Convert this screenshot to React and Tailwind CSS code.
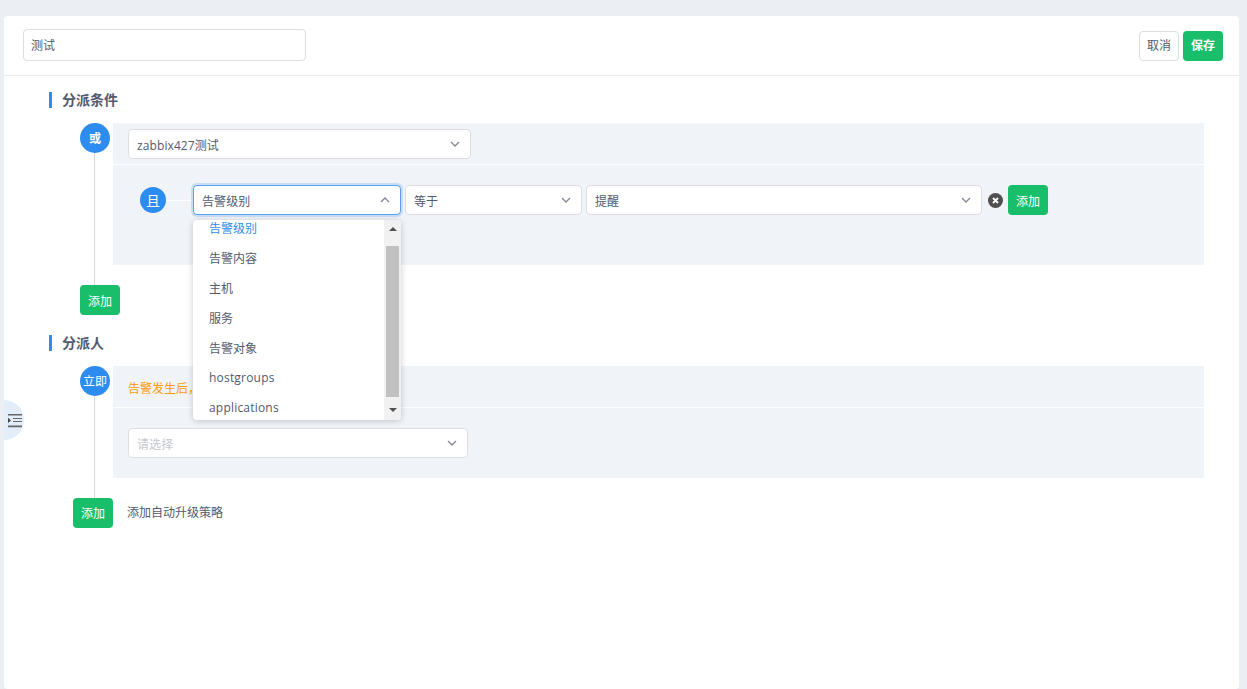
import React from 'react';

const Chevron = ({ up }) => (
  <svg width="12" height="8" viewBox="0 0 12 8" fill="none" stroke="#808695" strokeWidth="1.3" className="shrink-0">
    <path d={up ? 'M2 6l4-4 4 4' : 'M2 2l4 4 4-4'} />
  </svg>
);

const Select = ({ value, placeholder, width, focused, up, children }) => (
  <div className={`relative shrink-0 ${width}`}>
    <div
      className={`flex h-[30px] items-center justify-between rounded border bg-white pl-2 pr-[9px] ${
        focused ? 'border-[#57a3f3] shadow-[0_0_0_2px_rgba(45,140,240,0.2)]' : 'border-[#dcdee2]'
      }`}
    >
      <span className={`pt-1 tracking-[0.1px] ${value ? 'text-[#515a6e]' : 'text-[#c5c8ce]'}`}>{value || placeholder}</span>
      <Chevron up={up} />
    </div>
    {children}
  </div>
);

const AddButton = ({ className = '' }) => (
  <button className={`h-[30px] w-10 shrink-0 rounded bg-[#19be6b] text-white ${className}`}>添加</button>
);

const SectionTitle = ({ children }) => (
  <div className="ml-[45px] flex h-4 items-center border-l-[3px] border-[#2d8cf0] pl-[10px] text-sm font-bold leading-4 text-[#515a6e]">
    <span className="-mt-px">{children}</span>
  </div>
);

const options = ['告警内容', '主机', '服务', '告警对象'];
const latinOptions = ['hostgroups', 'applications'];

const Dropdown = () => (
  <div className="absolute left-0 top-[35px] z-10 flex h-[200px] w-[208px] overflow-hidden rounded bg-white shadow-[0_1px_6px_rgba(0,0,0,0.2)]">
    <ul className="-mt-[7px] flex-1">
      <li className="flex h-[30px] items-center px-4 pt-[2px] text-[#2d8cf0]">告警级别</li>
      {options.map((o) => (
        <li key={o} className="flex h-[30px] items-center px-4 pt-[2px] text-[#515a6e]">{o}</li>
      ))}
      {latinOptions.map((o) => (
        <li key={o} className="flex h-[30px] items-center px-4 tracking-[0.2px] text-[#515a6e]">{o}</li>
      ))}
    </ul>
    {/* scrollbar */}
    <div className="flex w-[17px] flex-col items-center bg-[#f1f1f1]">
      <div className="mt-[7px] h-0 w-0 border-x-[4px] border-b-[4px] border-x-transparent border-b-[#505050]" />
      <div className="mt-[15px] h-[151px] w-[13px] bg-[#c1c1c1]" />
      <div className="mt-[11px] h-0 w-0 border-x-[4px] border-t-[4px] border-x-transparent border-t-[#505050]" />
    </div>
  </div>
);

export default function App() {
  return (
    <div className="relative h-screen overflow-hidden bg-[#ebeef3] pl-1 pr-2 pt-4 font-['Open_Sans','Noto_Sans_CJK_SC',sans-serif] text-xs text-[#515a6e]">
      <div className="h-full rounded bg-white">
        {/* Header */}
        <div className="flex h-[60px] items-center justify-between border-b border-[#e8eaec] pl-[19px] pr-4">
          <input
            readOnly
            value="测试"
            className="-mt-[2px] h-8 w-[283px] rounded border border-[#dcdee2] px-[7px] text-xs text-[#515a6e] outline-none"
          />
          <div className="flex gap-1">
            <button className="h-[30px] w-10 rounded border border-[#dcdee2] bg-white text-[#515a6e]">取消</button>
            <button className="h-[30px] w-10 rounded bg-[#19be6b] font-bold text-white">保存</button>
          </div>
        </div>

        {/* Dispatch conditions */}
        <div className="mt-4">
          <SectionTitle>分派条件</SectionTitle>
        </div>
        <div className="ml-[76px] mr-[35px] mt-[15px] flex">
          <div className="mr-[3px] flex w-[30px] shrink-0 flex-col">
            <div className="flex h-[30px] w-[30px] items-center justify-center rounded-full bg-[#2d8cf0] pt-[2px] font-bold text-white">或</div>
            <div className="-mb-5 ml-[14px] w-px flex-1 bg-[#d8d8d8]" />
          </div>
          <div className="h-[142px] flex-1 bg-[#f0f3f8]">
            <div className="h-[42px] border-b border-white pl-[15px] pt-[6px]">
              <Select value="zabbix427测试" width="w-[343px]" />
            </div>
            <div className="flex pl-[27px] pt-5">
              <div className="flex h-[30px] w-[53px] shrink-0 items-center">
                <div className="flex h-[26px] w-[26px] shrink-0 items-center justify-center rounded-full bg-[#2d8cf0] pt-[2px] text-sm text-white">且</div>
                <div className="h-px flex-1 bg-white" />
              </div>
              <Select value="告警级别" width="w-[208px]" focused up>
                <Dropdown />
              </Select>
              <Select value="等于" width="ml-1 w-[177px]" />
              <Select value="提醒" width="ml-1 w-[396px]" />
              <svg width="15" height="15" viewBox="0 0 15 15" className="ml-[6px] mt-[8px] shrink-0">
                <circle cx="7.5" cy="7.5" r="7.5" fill="#4f4f4f" />
                <path d="M5 5l5 5M10 5l-5 5" stroke="#fff" strokeWidth="1.8" />
              </svg>
              <AddButton className="ml-[5px] pt-1" />
            </div>
          </div>
        </div>
        <AddButton className="ml-[76px] mt-5 block pt-1" />

        {/* Assignees */}
        <div className="mt-5">
          <SectionTitle>分派人</SectionTitle>
        </div>
        <div className="ml-[76px] mr-[35px] mt-[15px] flex">
          <div className="mr-[3px] flex w-[30px] shrink-0 flex-col">
            <div className="flex h-[30px] w-[30px] items-center justify-center rounded-full bg-[#2d8cf0] pt-[2px] text-white">立即</div>
            <div className="-mb-5 ml-[14px] w-px flex-1 bg-[#d8d8d8]" />
          </div>
          <div className="h-[112px] flex-1 bg-[#f0f3f8]">
            <div className="flex h-[42px] items-center border-b border-white pl-[15px] pt-[4px] text-[#ff9900]">告警发生后，</div>
            <div className="pl-[15px] pt-5">
              <Select placeholder="请选择" width="w-[340px]" />
            </div>
          </div>
        </div>
        <div className="ml-[69px] mt-5 flex items-center gap-[14px]">
          <AddButton className="pt-[2px]" />
          <span className="text-[#515a6e]">添加自动升级策略</span>
        </div>
      </div>

      {/* Sidebar toggle */}
      <button className="absolute left-1 top-[400px] flex h-10 w-5 items-center justify-start rounded-r-full bg-[#e3edfa] pl-1 pt-[2px]">
        <svg width="14" height="14" viewBox="0 0 14 14" fill="#666" className="shrink-0">
          <path d="M0 0h14v1.6H0zM5 4h9v1.1H5zM5 7h9v1.1H5zM0 11.6h14v1.6H0z" />
          <path d="M0 3.8l3 2.6-3 2.6z" fill="#444" />
        </svg>
      </button>
    </div>
  );
}
